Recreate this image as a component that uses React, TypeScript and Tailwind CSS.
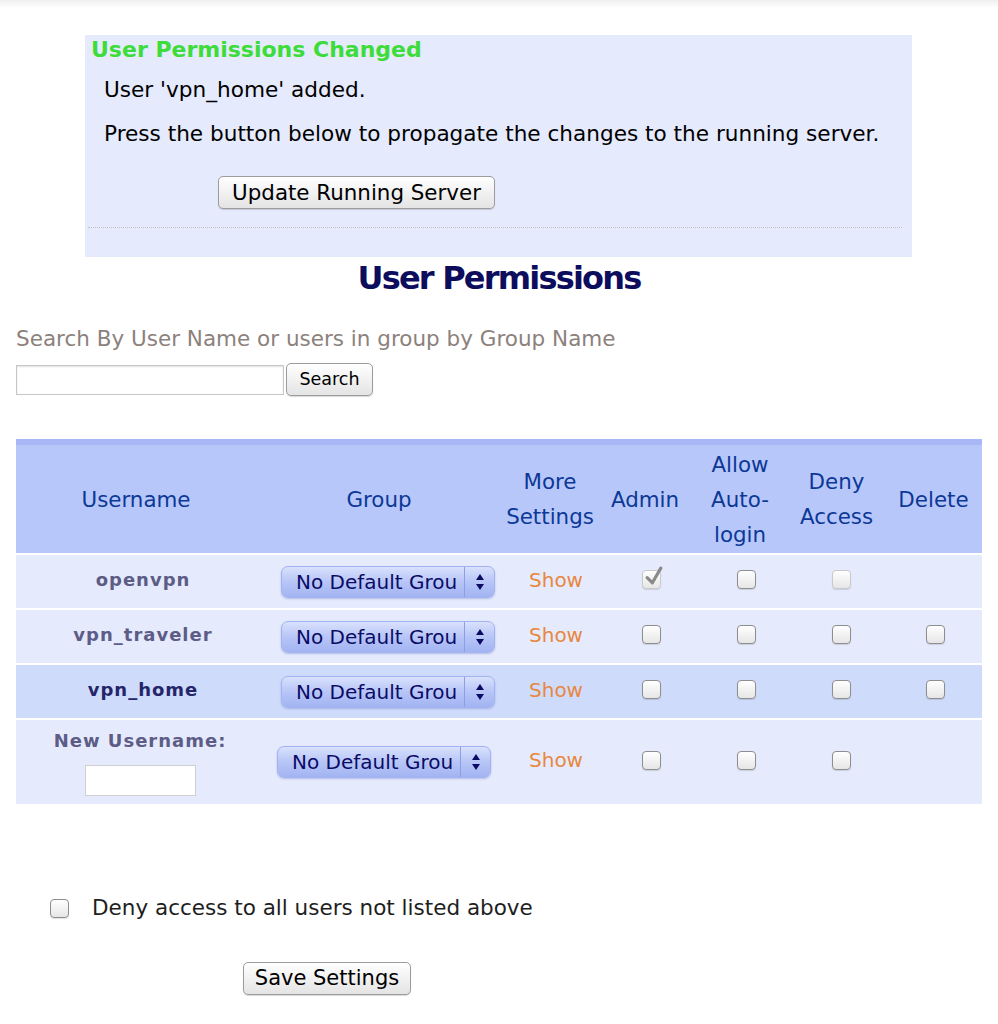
import React from "react";

const font = { fontFamily: '"DejaVu Sans", Verdana, sans-serif' };

function Btn({ children, className = "" }: { children: React.ReactNode; className?: string }) {
  return (
    <button
      className={`h-[33px] rounded-[5px] border border-[#9c9c9c] bg-gradient-to-b from-white to-[#e4e4e4] leading-none text-black shadow-[0_1px_1px_rgba(0,0,0,0.15)] ${className}`}
    >
      {children}
    </button>
  );
}

function Check({ checked = false, disabled = false }: { checked?: boolean; disabled?: boolean }) {
  return (
    <span
      className={`relative inline-block h-[19px] w-[19px] rounded-[4px] border bg-gradient-to-b from-white to-[#e6e6e6] shadow-[0_1px_1px_rgba(0,0,0,0.12)] ${
        disabled ? "border-[#c9c9c9]" : "border-[#8e8e8e]"
      }`}
    >
      {checked && (
        <svg viewBox="0 0 20 20" className="absolute -top-[5px] left-[1px] h-[21px] w-[21px]">
          <path d="M3 11 L8 16 L16 2" fill="none" stroke="#8a8a8a" strokeWidth="3" strokeLinecap="round" strokeLinejoin="round" />
        </svg>
      )}
    </span>
  );
}

function GroupSelect() {
  return (
    <div className="flex h-[32px] w-[214px] items-center rounded-[7px] border border-[#a3b3f1] bg-gradient-to-b from-[#d9e1fc] via-[#b7c5f7] to-[#a2b4f2] shadow-[0_1px_2px_rgba(40,60,160,0.25)]">
      <span className="flex-1 pl-[14px] text-[20px] leading-none text-[#0b0b66]">No Default Grou</span>
      <span className="flex h-full w-[30px] items-center justify-center border-l border-[#8c9ee6]">
        <svg viewBox="0 0 10 18" className="h-[18px] w-[10px]">
          <path d="M5 1 L9 7 L1 7 Z" fill="#0b0b66" />
          <path d="M5 17 L9 11 L1 11 Z" fill="#0b0b66" />
        </svg>
      </span>
    </div>
  );
}

const cols = "grid grid-cols-[240px_246px_96px_94px_96px_97px_97px]";

type Row = { name: string; admin?: boolean; denyDisabled?: boolean; noDelete?: boolean; active?: boolean };

const rows: Row[] = [
  { name: "openvpn", admin: true, denyDisabled: true, noDelete: true },
  { name: "vpn_traveler" },
  { name: "vpn_home", active: true },
];

export default function App() {
  return (
    <div className="min-h-[1024px] w-[998px] bg-white" style={font}>
      <div className="h-[8px] bg-gradient-to-b from-[#efefef] to-white" />

      {/* Notice */}
      <div className="ml-[85px] mt-[27px] h-[222px] w-[827px] bg-[#e5eafc]">
        <div className="pl-[6px] text-[22px] font-bold leading-[30px] text-[#3ddc3a]">User Permissions Changed</div>
        <p className="mt-[10px] pl-[19px] text-[21.6px] leading-[30px] text-black">User 'vpn_home' added.</p>
        <p className="mt-[14px] pl-[19px] text-[21.6px] leading-[30px] text-black">
          Press the button below to propagate the changes to the running server.
        </p>
        <div className="mt-[27px] pl-[133px]">
          <Btn className="w-[277px] text-[21.4px]">Update Running Server</Btn>
        </div>
        <div className="ml-[3px] mr-[10px] mt-[18px] border-t border-dotted border-[#c2c2c2]" />
      </div>

      <h1 className="mt-[1px] text-center text-[32px] font-bold leading-[40px] tracking-[-1.8px] text-[#0d0d5e]">
        User Permissions
      </h1>

      {/* Search */}
      <div className="px-[16px]">
        <div className="mt-[28px] text-[21.5px] leading-[26px] text-[#8c817c]">
          Search By User Name or users in group by Group Name
        </div>
        <div className="mt-[11px] flex items-center gap-[2px]">
          <input className="h-[30px] w-[268px] border border-[#c6c6c6] bg-white shadow-[inset_0_1px_2px_rgba(0,0,0,0.12)]" />
          <Btn className="h-[28px] w-[87px] text-[17.5px]">Search</Btn>
        </div>

        {/* Table */}
        <div className="mt-[43px] w-[966px]">
          <div className={`${cols} h-[114px] border-t-[6px] border-[#a8b8f6] bg-[#b8c7fa] text-center text-[21.4px] leading-[35px] text-[#0c3896]`}>
            <div className="flex items-center justify-center">Username</div>
            <div className="flex items-center justify-center">Group</div>
            <div className="flex items-center justify-center">More<br />Settings</div>
            <div className="flex items-center justify-center">Admin</div>
            <div className="flex items-center justify-center">Allow<br />Auto-<br />login</div>
            <div className="flex items-center justify-center">Deny<br />Access</div>
            <div className="flex items-center justify-center">Delete</div>
          </div>

          <div className="mt-[2px] flex flex-col gap-[2px]">
            {rows.map((r) => (
              <div key={r.name} className={`${cols} h-[53px] items-center ${r.active ? "bg-[#cfdbfa]" : "bg-[#e5eafc]"}`}>
                <div
                  className={`pl-[14px] pb-[4px] text-center text-[18px] font-bold tracking-[1px] ${r.active ? "text-[#25256a]" : "text-[#5c5c86]"}`}
                >
                  {r.name}
                </div>
                <div className="pl-[25px]">
                  <GroupSelect />
                </div>
                <div className="pl-[12px] pb-[4px] text-center text-[20px] text-[#e8873f]">Show</div>
                <div className="flex justify-center pl-[12px] pb-[4px]">
                  <Check checked={r.admin} disabled={r.admin} />
                </div>
                <div className="flex justify-center pl-[12px] pb-[4px]">
                  <Check />
                </div>
                <div className="flex justify-center pl-[9px] pb-[4px]">
                  <Check disabled={r.denyDisabled} />
                </div>
                <div className="flex justify-center pl-[3px] pb-[4px]">{!r.noDelete && <Check />}</div>
              </div>
            ))}

            <div className={`${cols} h-[84px] items-center bg-[#e5eafc]`}>
              <div className="flex flex-col items-center gap-[12px] pl-[8px]">
                <span className="text-[18px] font-bold leading-[24px] tracking-[1px] text-[#5c5c86]">New Username:</span>
                <input className="h-[31px] w-[111px] border border-[#cfcfcf] bg-white" />
              </div>
              <div className="pl-[21px]">
                <GroupSelect />
              </div>
              <div className="pl-[12px] pb-[4px] text-center text-[20px] text-[#e8873f]">Show</div>
              <div className="flex justify-center pl-[12px] pb-[4px]">
                <Check />
              </div>
              <div className="flex justify-center pl-[12px] pb-[4px]">
                <Check />
              </div>
              <div className="flex justify-center pl-[9px] pb-[4px]">
                <Check />
              </div>
              <div />
            </div>
          </div>
        </div>
      </div>

      {/* Footer controls */}
      <div className="ml-[50px] mt-[91px] flex h-[26px] items-center gap-[23px]">
        <Check />
        <span className="text-[21.5px] leading-[26px] text-[#1e1e1e]">Deny access to all users not listed above</span>
      </div>
      <div className="ml-[243px] mt-[41px]">
        <Btn className="w-[168px] text-[21px]">Save Settings</Btn>
      </div>
    </div>
  );
}
